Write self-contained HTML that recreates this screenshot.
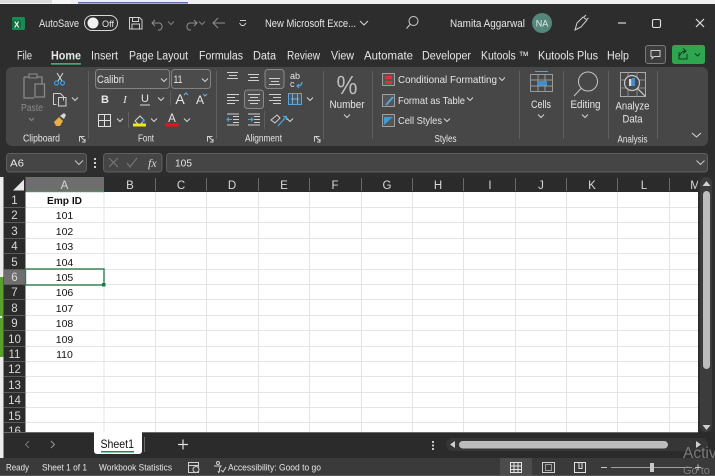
<!DOCTYPE html>
<html><head><meta charset="utf-8"><style>
html,body{margin:0;padding:0;width:715px;height:476px;overflow:hidden;background:#2b2b2b}
svg{display:block;position:absolute;left:0;top:0}
text{font-family:"Liberation Sans",sans-serif;fill:#e6e6e6}
.i{fill:none;stroke:#d0d0d0;stroke-width:1}
.g{fill:none;stroke:#8f8f8f;stroke-width:1}
.b{fill:none;stroke:#3f9ad6;stroke-width:1.2}
.s{stroke:#5f5f5f;stroke-width:1}
.l{fill:#d4d4d4}
.d{fill:#9a9a9a}
.h{fill:#d8d8d8;text-anchor:middle;font-size:11.5px}
.c{fill:#111;text-anchor:middle;font-size:10.5px}
.gl{stroke:#e4e4e4;stroke-width:1}
</style></head><body>
<svg width="715" height="476" viewBox="0 0 715 476" xmlns="http://www.w3.org/2000/svg">
<defs>
<path id="ch" d="M-3 -1.5L0 1.5L3 -1.5" fill="none" stroke="#d4d4d4" stroke-width="1"/>
</defs>
<!-- top strip -->
<rect width="715" height="4" fill="#f0f0f0"/>
<rect x="0" y="0" width="52" height="3" fill="#dcdcdc"/>
<rect x="52" y="0" width="19" height="4" fill="#f7f7f7"/>
<rect x="78" y="2" width="110" height="1.5" fill="#5a6fb0"/>
<rect width="715" height="476" y="4" fill="#2d2d2d"/>

<!-- title bar -->
<rect x="12" y="17" width="13" height="13" rx="1.5" fill="#1a8a54"/>
<rect x="12" y="20" width="9" height="8" fill="#107040"/>
<text x="14" y="27.5" font-size="8" font-weight="bold" style="fill:#fff">X</text>
<text x="39" y="27" font-size="11" textLength="40" lengthAdjust="spacingAndGlyphs">AutoSave</text>
<rect x="84.500" y="15.500" width="33" height="15" rx="7.500" fill="none" stroke="#d8d8d8"/>
<circle cx="93" cy="23" r="5.500" fill="#f2f2f2"/>
<text x="102" y="27" font-size="9.500" textLength="12" lengthAdjust="spacingAndGlyphs">Off</text>
<path class="i" d="M129.500 17.500h10l2.500 2.500v9h-12.500zM132.500 17.500v4h6v-4M132 29v-5h7.500v5"/>
<path class="g" d="M155 20l-3 3 3 3M152 23h8a4 4 0 0 1 0 7h-2"/>
<use href="#ch" x="171" y="23" opacity=".5"/>
<path class="g" d="M194 20l3 3-3 3M197 23h-8a4 4 0 0 0 0 7h2"/>
<use href="#ch" x="202" y="23" opacity=".5"/>
<path class="g" d="M213 23h12M218 18l-5 5 5 5"/>
<path class="i" d="M240 20.500h6M239.500 23l2 2.500h2.500l2-2.500"/>
<text x="265" y="27" font-size="11" textLength="91" lengthAdjust="spacingAndGlyphs">New Microsoft Exce...</text>
<path d="M360 21l4 4 4-4" fill="none" stroke="#d8d8d8"/>
<circle cx="413.500" cy="21" r="4.500" class="i"/><path class="i" d="M410 24.500l-3.500 4"/>
<text x="450" y="27" font-size="11" textLength="75" lengthAdjust="spacingAndGlyphs">Namita Aggarwal</text>
<circle cx="542" cy="23" r="10" fill="#55867c"/>
<text x="542" y="26.500" font-size="9" text-anchor="middle" style="fill:#e4efec">NA</text>
<path class="i" d="M575 30l2-7 6-6 4 3-6 7zM584 17l2-2M587 19l1.500-1"/>
<path d="M618 23h8" stroke="#d8d8d8" stroke-width="1.2"/>
<rect x="652.500" y="19.500" width="8" height="8" rx="1.500" fill="none" stroke="#e0e0e0" stroke-width="1.100"/>
<path d="M696 19l8 8M704 19l-8 8" stroke="#e0e0e0" stroke-width="1.200"/>

<!-- menu tabs -->
<g font-size="11.500">
<text x="17" y="59.500" textLength="15" lengthAdjust="spacingAndGlyphs">File</text>
<text x="51" y="59.500" textLength="30" lengthAdjust="spacingAndGlyphs" font-weight="bold">Home</text>
<text x="91" y="59.500" textLength="27" lengthAdjust="spacingAndGlyphs">Insert</text>
<text x="129" y="59.500" textLength="59" lengthAdjust="spacingAndGlyphs">Page Layout</text>
<text x="199" y="59.500" textLength="44" lengthAdjust="spacingAndGlyphs">Formulas</text>
<text x="253" y="59.500" textLength="23" lengthAdjust="spacingAndGlyphs">Data</text>
<text x="287" y="59.500" textLength="33" lengthAdjust="spacingAndGlyphs">Review</text>
<text x="331" y="59.500" textLength="23" lengthAdjust="spacingAndGlyphs">View</text>
<text x="364" y="59.500" textLength="49" lengthAdjust="spacingAndGlyphs">Automate</text>
<text x="422" y="59.500" textLength="49" lengthAdjust="spacingAndGlyphs">Developer</text>
<text x="481" y="59.500" textLength="48" lengthAdjust="spacingAndGlyphs">Kutools ™</text>
<text x="538" y="59.500" textLength="60" lengthAdjust="spacingAndGlyphs">Kutools Plus</text>
<text x="607" y="59.500" textLength="22" lengthAdjust="spacingAndGlyphs">Help</text>
</g>
<rect x="51" y="63" width="30" height="1.700" fill="#45a975"/>
<rect x="645.500" y="45.500" width="20" height="18" rx="2.500" fill="#3c3c3c" stroke="#7a7a7a"/>
<path class="i" d="M651 50.500h9v6h-6l-2 2v-2h-1z"/>
<rect x="672" y="45" width="33" height="19" rx="2.500" fill="#2ea650"/>
<path d="M679 52v7h8v-5M679.500 56c1-3 3-5 6-5M683 48.500l3 2.500-3 2.500" fill="none" stroke="#123a20"/>
<path d="M695 53.500l2.500 2.500 2.500-2.500" fill="none" stroke="#123a20"/>

<!-- ribbon -->
<rect x="6" y="67" width="702" height="79" rx="6" fill="#474747"/>
<!-- separators -->
<path class="s" d="M88.500 71v68M216.500 71v68M323.500 71v68M372.500 71v68M519.500 71v68M563.500 71v68M608.500 71v68M657.500 71v68M170.500 91v14M128.500 112v16M264.500 111v18"/>

<!-- clipboard -->
<path d="M24 77h18v16h-2M24 77v21h10" fill="none" stroke="#8d8d8d" stroke-width="1.200"/>
<rect x="29" y="74" width="8" height="4" fill="#474747" stroke="#8d8d8d"/>
<rect x="35" y="84" width="9.500" height="13" fill="#474747" stroke="#8d8d8d" stroke-width="1.200"/>
<text x="21" y="111" font-size="10" textLength="22" lengthAdjust="spacingAndGlyphs" class="d" style="fill:#8a8a8a">Paste</text>
<path d="M29 118l2.500 2.500 2.500-2.500" fill="none" stroke="#8a8a8a"/>
<path d="M57 73l5 8M63 73l-5 8" stroke="#d8d8d8" fill="none"/>
<circle cx="56.500" cy="83" r="2" class="b"/><circle cx="62.500" cy="83" r="2" class="b"/>
<path class="i" d="M53.500 93.500h7l3 3v4M53.500 93.500v11h3"/>
<rect x="58.500" y="97.500" width="7.500" height="8.500" class="i" fill="none"/>
<use href="#ch" x="75" y="99"/>
<path d="M54 122l5-5 4 4-3 5h-4z" fill="#e8b040"/>
<path d="M60 116l4-3 2 2-2 4z" fill="#d8d8d8"/>
<text x="23" y="141.500" font-size="10" textLength="37" lengthAdjust="spacingAndGlyphs">Clipboard</text>
<path class="i" d="M79.500 141.500v-5h5M81 137l4 4M85 139v3h-3"/>

<!-- font -->
<rect x="95.500" y="69.500" width="74" height="19" rx="3" fill="#4b4b4b" stroke="#828282"/>
<text x="97" y="83" font-size="11" textLength="27" lengthAdjust="spacingAndGlyphs">Calibri</text>
<use href="#ch" x="164" y="80"/>
<rect x="171.500" y="69.500" width="39" height="19" rx="3" fill="#4b4b4b" stroke="#828282"/>
<text x="173.500" y="83" font-size="11" textLength="9" lengthAdjust="spacingAndGlyphs">11</text>
<use href="#ch" x="205" y="80"/>
<text x="105" y="103" font-size="11" font-weight="bold" text-anchor="middle">B</text>
<text x="125" y="103" font-size="11" font-style="italic" text-anchor="middle" style="font-family:'Liberation Serif',serif">I</text>
<text x="145" y="102" font-size="11" text-anchor="middle">U</text>
<path d="M140 105h10" stroke="#d8d8d8"/>
<use href="#ch" x="161" y="99"/>
<text x="180" y="104" font-size="14" text-anchor="middle">A</text>
<path d="M184 95l2-2 2 2" fill="none" stroke="#6ab2e6"/>
<text x="200" y="104" font-size="12" text-anchor="middle">A</text>
<path d="M203 94l2 2 2-2" fill="none" stroke="#6ab2e6"/>
<path d="M98.500 114.500h12v12h-12zM104.500 114.500v12M98.500 120.500h12" fill="none" stroke="#e0e0e0"/>
<use href="#ch" x="120" y="120"/>
<path d="M135 121l5-5 4 4-3 4h-3z" fill="none" stroke="#d8d8d8"/>
<path d="M143 118l2 4h-3z" fill="#3f9ad6"/>
<rect x="133" y="123.500" width="13" height="3" fill="#f0e818"/>
<use href="#ch" x="154" y="120"/>
<text x="172" y="122" font-size="11.500" text-anchor="middle">A</text>
<rect x="165.500" y="123.500" width="13" height="3" fill="#e8141c"/>
<use href="#ch" x="187" y="120"/>
<text x="146" y="141.500" font-size="10" text-anchor="middle" textLength="16" lengthAdjust="spacingAndGlyphs">Font</text>
<path class="i" d="M207.500 141.500v-5h5M209 137l4 4M213 139v3h-3"/>

<!-- alignment -->
<path class="i" d="M227 72.500h11M229 75.500h8M227 78.500h11M248 74.500h11M250 77.500h8M248 80.500h11"/>
<rect x="265" y="69.500" width="19" height="19" rx="3" fill="#505050" stroke="#8a8a8a"/>
<path class="i" d="M269 78.500h11M271 81.500h8M269 84.500h11"/>
<text x="290" y="79" font-size="9">ab</text><text x="290" y="87" font-size="9">c</text>
<path d="M302 82c0 3-2 4-5 4M299 84l-2 2 2 2" fill="none" stroke="#4ea6e0" stroke-width="1.200"/>
<path class="i" d="M227 94.500h12M227 97.500h8M227 100.500h12M227 103.500h8"/>
<rect x="244.500" y="90" width="19" height="18.500" rx="3" fill="#505050" stroke="#8a8a8a"/>
<path class="i" d="M248 94.500h12M250 97.500h8M248 100.500h12M250 103.500h8"/>
<path class="i" d="M269 94.500h12M273 97.500h8M269 100.500h12M273 103.500h8"/>
<rect x="288.500" y="93.500" width="13" height="11" fill="#44596a" stroke="#53a6e0"/>
<path d="M291 99h8M292.500 94v10M297.500 94v10" stroke="#a8c4d8" stroke-width=".7"/>
<use href="#ch" x="310" y="99"/>
<path class="i" d="M233 116.500h6M233 119.500h6M233 122.500h6M227 125h12M227 114h12"/>
<path d="M232 119.500h-5M229 117.500l-2 2 2 2" fill="none" stroke="#4ea6e0"/>
<path class="i" d="M254 116.500h6M254 119.500h6M254 122.500h6M248 125h12M248 114h12"/>
<path d="M248 119.500h5M251 117.500l2 2-2 2" fill="none" stroke="#4ea6e0"/>
<path class="i" d="M271 120l6-5 3 3-5 5z"/>
<path d="M278 126l8-9M283 116.500h3.500v3.500" fill="none" stroke="#4ea6e0" stroke-width="1.200"/>
<use href="#ch" x="290" y="120"/>
<text x="263.500" y="141.500" font-size="10" text-anchor="middle" textLength="37" lengthAdjust="spacingAndGlyphs">Alignment</text>
<path class="i" d="M314.500 141.500v-5h5M316 137l4 4M320 139v3h-3"/>

<!-- number -->
<text x="347" y="94" font-size="26" text-anchor="middle" textLength="21" lengthAdjust="spacingAndGlyphs" style="fill:#bcbcbc">%</text>
<text x="347" y="108" font-size="11" text-anchor="middle" textLength="35" lengthAdjust="spacingAndGlyphs">Number</text>
<use href="#ch" x="347" y="116"/>

<!-- styles -->
<rect x="382.500" y="73.500" width="12" height="12" fill="#555" stroke="#a0a0a0"/>
<rect x="385" y="76" width="7" height="3" fill="#e03030"/><rect x="385" y="81" width="7" height="3" fill="#e03030"/>
<text x="398" y="83" font-size="10.500" textLength="99" lengthAdjust="spacingAndGlyphs">Conditional Formatting</text>
<use href="#ch" x="502" y="79"/>
<rect x="382.500" y="94.500" width="12" height="12" fill="#555" stroke="#a0a0a0"/>
<path d="M386 105l7-8" stroke="#4ea6e0" stroke-width="2"/>
<text x="398" y="104" font-size="10.500" textLength="67" lengthAdjust="spacingAndGlyphs">Format as Table</text>
<use href="#ch" x="470" y="99"/>
<rect x="382.500" y="114.500" width="12" height="12" fill="#555" stroke="#a0a0a0"/>
<path d="M384 125v-8h9z" fill="#3f9ad6"/>
<text x="398" y="124" font-size="10.500" textLength="44" lengthAdjust="spacingAndGlyphs">Cell Styles</text>
<use href="#ch" x="447" y="120"/>
<text x="445.500" y="142" font-size="10" text-anchor="middle" textLength="22" lengthAdjust="spacingAndGlyphs">Styles</text>

<!-- cells -->
<path d="M535 71.500h13" stroke="#4ea6e0"/>
<rect x="530.500" y="74.500" width="22" height="17" fill="none" stroke="#9a9a9a"/>
<path d="M530.500 80h22M530.500 86h22M538 74.500v17M545 74.500v17" stroke="#9a9a9a" fill="none"/>
<rect x="537" y="81" width="10" height="4.500" fill="#3f8fd0"/>
<text x="541" y="108" font-size="11" text-anchor="middle" textLength="20" lengthAdjust="spacingAndGlyphs">Cells</text>
<use href="#ch" x="541" y="116"/>

<!-- editing -->
<circle cx="588" cy="81.500" r="9.500" fill="none" stroke="#c4c4c4"/>
<path d="M581 88.500l-7 7.500" stroke="#c4c4c4" fill="none"/>
<text x="585.500" y="108" font-size="11" text-anchor="middle" textLength="30" lengthAdjust="spacingAndGlyphs">Editing</text>
<use href="#ch" x="585" y="116"/>

<!-- analyze -->
<rect x="620.500" y="72.500" width="25" height="24" fill="none" stroke="#aaa"/>
<path d="M620.500 80h25M620.500 88h25M628 72.500v24M637 72.500v24" stroke="#888" fill="none"/>
<circle cx="632" cy="83" r="7.500" fill="#474747" stroke="#c8c8c8" stroke-width="1.200"/>
<rect x="629" y="79" width="2.500" height="7" fill="#d8d8d8"/><rect x="632" y="78" width="3" height="8" fill="#3f8fd0"/>
<path d="M637 88l8 8" stroke="#d0d0d0" stroke-width="1.200"/>
<text x="632.500" y="109.500" font-size="11" text-anchor="middle" textLength="34" lengthAdjust="spacingAndGlyphs">Analyze</text>
<text x="632.500" y="122.500" font-size="11" text-anchor="middle" textLength="20" lengthAdjust="spacingAndGlyphs">Data</text>
<text x="632.500" y="142.500" font-size="10" text-anchor="middle" textLength="30" lengthAdjust="spacingAndGlyphs">Analysis</text>
<path d="M692 133l4.500 4 4.500-4" fill="none" stroke="#d8d8d8"/>

<!-- formula bar -->
<rect x="6.500" y="153.500" width="80" height="18.500" rx="3" fill="#454545" stroke="#5e5e5e"/>
<text x="10" y="166.500" font-size="10.500" textLength="14" lengthAdjust="spacingAndGlyphs">A6</text>
<path d="M75 160.500l4 4 4-4" fill="none" stroke="#c8c8c8"/>
<rect x="94" y="158" width="2" height="2" fill="#d0d0d0"/><rect x="94" y="162" width="2" height="2" fill="#d0d0d0"/><rect x="94" y="166" width="2" height="2" fill="#d0d0d0"/>
<rect x="103.500" y="153.500" width="58.500" height="18.500" rx="3" fill="#454545" stroke="#5e5e5e"/>
<path d="M109 158l9 9M118 158l-9 9M127 163l3 4 7-9" fill="none" stroke="#777" stroke-width="1.100"/>
<text x="148" y="167" font-size="12" font-style="italic" style="font-family:'Liberation Serif',serif;fill:#d8d8d8">fx</text>
<rect x="166.500" y="153.500" width="541" height="18.500" rx="3" fill="#454545" stroke="#5e5e5e"/>
<text x="175" y="166.500" font-size="10.500" textLength="17" lengthAdjust="spacingAndGlyphs">105</text>
<path d="M696.500 160.500l4 4 4-4" fill="none" stroke="#c8c8c8"/>

<!-- left strip -->
<rect x="0" y="177" width="3.500" height="281" fill="#ededed"/>
<rect x="0" y="277" width="3.500" height="80" fill="#5aa02c"/>
<rect x="0" y="316" width="2" height="2" fill="#fff"/>

<!-- sheet -->
<rect x="4" y="177" width="694" height="255" fill="#2b2b2b"/>
<rect x="25.500" y="192" width="672.500" height="240" fill="#fff"/>
<g class="gl">
<path d="M155.500 192v240M206.500 192v240M258.500 192v240M309.500 192v240M361.500 192v240M412.500 192v240M463.500 192v240M515.500 192v240M566.500 192v240M617.500 192v240M669.500 192v240M104 192v240"/>
<path d="M25 207.500h673M25 222.500h673M25 238.500h673M25 253.500h673M25 269.500h673M25 284.500h673M25 299.500h673M25 315.500h673M25 330.500h673M25 346.500h673M25 361.500h673M25 376.500h673M25 392.500h673M25 407.500h673M25 422.500h673"/>
</g>
<!-- row headers -->
<rect x="4" y="192" width="21.500" height="240" fill="#2b2b2b"/>
<rect x="4" y="269" width="21.500" height="15.500" fill="#6e6e6e"/>
<path stroke="#5a5a5a" d="M4 207.500h21M4 222.500h21M4 238.500h21M4 253.500h21M4 269.500h21M4 284.500h21M4 299.500h21M4 315.500h21M4 330.500h21M4 346.500h21M4 361.500h21M4 376.500h21M4 392.500h21M4 407.500h21M4 422.500h21"/>
<path d="M13 190.500L24 190.500L24 179.500z" fill="#e8e8e8"/>
<g>
<text class="h" x="14.500" y="204">1</text><text class="h" x="14.500" y="219">2</text><text class="h" x="14.500" y="235">3</text><text class="h" x="14.500" y="250">4</text><text class="h" x="14.500" y="266">5</text><text class="h" x="14.500" y="281">6</text><text class="h" x="14.500" y="296">7</text><text class="h" x="14.500" y="312">8</text><text class="h" x="14.500" y="327">9</text><text class="h" x="14.500" y="343">10</text><text class="h" x="14.500" y="358">11</text><text class="h" x="14.500" y="373">12</text><text class="h" x="14.500" y="389">13</text><text class="h" x="14.500" y="404">14</text><text class="h" x="14.500" y="420">15</text><text class="h" x="14.500" y="435">16</text>
</g>
<!-- column headers -->
<rect x="25.500" y="177" width="78.500" height="15" fill="#6e6e6e"/>
<rect x="25.500" y="191" width="78.500" height="1.200" fill="#3f9a6a"/>
<path stroke="#6a6a6a" d="M155.500 178v13M206.500 178v13M258.500 178v13M309.500 178v13M361.500 178v13M412.500 178v13M463.500 178v13M515.500 178v13M566.500 178v13M617.500 178v13M669.500 178v13"/>
<g>
<text class="h" x="64.500" y="189">A</text><text class="h" x="130" y="189">B</text><text class="h" x="181" y="189">C</text><text class="h" x="232" y="189">D</text><text class="h" x="284" y="189">E</text><text class="h" x="335" y="189">F</text><text class="h" x="387" y="189">G</text><text class="h" x="438" y="189">H</text><text class="h" x="490" y="189">I</text><text class="h" x="541" y="189">J</text><text class="h" x="592" y="189">K</text><text class="h" x="644" y="189">L</text><text class="h" x="695" y="189">M</text>
</g>
<!-- cells -->
<text class="c" x="64.500" y="204" font-weight="bold" textLength="35" lengthAdjust="spacingAndGlyphs">Emp ID</text>
<text class="c" x="64.500" y="219">101</text><text class="c" x="64.500" y="235">102</text><text class="c" x="64.500" y="250">103</text><text class="c" x="64.500" y="266">104</text><text class="c" x="64.500" y="281">105</text><text class="c" x="64.500" y="296">106</text><text class="c" x="64.500" y="312">107</text><text class="c" x="64.500" y="327">108</text><text class="c" x="64.500" y="343">109</text><text class="c" x="64.500" y="358">110</text>
<rect x="25.500" y="269" width="78.500" height="16" fill="none" stroke="#2f7d52" stroke-width="1.400"/>
<rect x="102" y="283" width="3.500" height="3.500" fill="#1f7a48"/>

<!-- vertical scroll -->
<rect x="698" y="177" width="17" height="255" fill="#2d2d2d"/>
<rect x="700" y="177" width="12" height="255" rx="6" fill="#3c3c3c"/>
<path d="M702.500 186l4-5 4 5z" fill="#d0d0d0"/>
<rect x="703" y="191" width="7" height="178" rx="3.500" fill="#bdbdbd"/>
<path d="M702.500 425l4 5 4-5z" fill="#d0d0d0"/>

<!-- tab bar -->
<rect x="4" y="432" width="711" height="26" fill="#2b2b2b"/>
<path d="M4 432.500h694" stroke="#6a6a6a"/>
<path d="M94 432h48v19a3 3 0 0 1-3 3h-42a3 3 0 0 1-3-3z" fill="#fff"/>
<text x="100.500" y="448" font-size="12" textLength="33.500" lengthAdjust="spacingAndGlyphs" style="fill:#111">Sheet1</text>
<rect x="101" y="451" width="33" height="1.500" fill="#1f8a50"/>
<path d="M144.500 437v15" stroke="#6a6a6a"/>
<path d="M29 441l-3.500 3.500 3.500 3.500" fill="none" stroke="#777"/>
<path d="M51 441l3.500 3.500-3.500 3.500" fill="none" stroke="#999"/>
<path d="M178 444.500h10M183 439.500v10" stroke="#e0e0e0" stroke-width="1.200"/>
<rect x="432" y="441" width="2" height="2" fill="#c8c8c8"/><rect x="432" y="444.500" width="2" height="2" fill="#c8c8c8"/><rect x="432" y="448" width="2" height="2" fill="#c8c8c8"/>
<rect x="446" y="438" width="262" height="13" rx="6.500" fill="#363636"/>
<path d="M450 444.500l5-3.500v7z" fill="#d0d0d0"/>
<rect x="459" y="441" width="209" height="7.500" rx="3.700" fill="#bdbdbd"/>
<path d="M696 441v7l5-3.500z" fill="#d0d0d0"/>

<!-- status bar -->
<rect x="0" y="458" width="715" height="17" fill="#3a3a3a"/>
<rect y="475" width="715" height="1" fill="#555"/>
<g font-size="9.500">
<text x="6" y="470.500" textLength="23" lengthAdjust="spacingAndGlyphs">Ready</text>
<text x="42" y="470.500" textLength="45" lengthAdjust="spacingAndGlyphs">Sheet 1 of 1</text>
<text x="99" y="470.500" textLength="73" lengthAdjust="spacingAndGlyphs">Workbook Statistics</text>
<text x="228" y="470.500" textLength="93" lengthAdjust="spacingAndGlyphs">Accessibility: Good to go</text>
</g>
<path class="i" d="M188.500 462.500h10v10h-10zM188.500 465.500h10"/>
<circle cx="196" cy="469.500" r="3" fill="#3a3a3a" stroke="#d0d0d0"/>
<circle cx="218" cy="463" r="1.500" class="i"/>
<path class="i" d="M214 466h7l-1.500 2v3l-1 2M219 473l-1-2M221 470l2 2 3-5"/>
<rect x="500" y="458" width="32" height="17" fill="#4c4c4c"/>
<path d="M510.500 462.500h11v10h-11zM514 462.500v10M518 462.500v10M510.500 466h11M510.500 469.500h11" fill="none" stroke="#e4e4e4"/>
<rect x="542.500" y="462.500" width="12" height="10" class="i"/><rect x="545.500" y="464.500" width="6" height="6" fill="none" stroke="#999"/>
<path d="M574.500 462.500h11v10h-11zM579 462.500v6h3v-6" fill="none" stroke="#e0e0e0"/>
<path d="M601 467.500h6" stroke="#c8c8c8"/>
<path d="M611 467.500h81" stroke="#a0a0a0"/>
<rect x="650" y="463" width="4" height="9" fill="#c8c8c8"/>
<path d="M695 467.500h6M698 464.500v6" stroke="#c8c8c8"/>

<!-- watermark -->
<text x="683" y="458" font-size="15.500" style="fill:#8e8e8e" opacity=".8">Activ</text>
<text x="683" y="474" font-size="11" style="fill:#8e8e8e" opacity=".8">Go to</text>
</svg>
</body></html>
